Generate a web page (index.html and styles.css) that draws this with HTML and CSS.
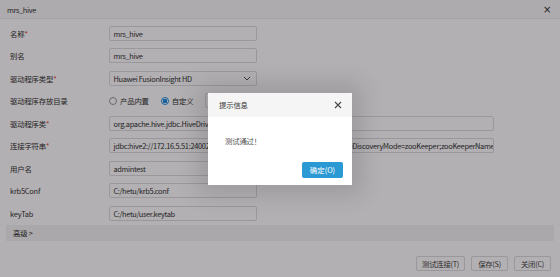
FILE: index.html
```html
<!DOCTYPE html>
<html lang="zh-CN">
<head>
  <meta charset="UTF-8">
  <title>mrs_hive</title>
  <link rel="stylesheet" href="styles.css">
</head>
<body>
  <div class="window">
    <div class="titlebar">
      <span>mrs_hive</span>
      <span class="x">&times;</span>
    </div>
    <div class="form">
      <div class="row">
        <label>名称<i>*</i></label>
        <div class="field">mrs_hive</div>
      </div>
      <div class="row">
        <label>别名</label>
        <div class="field">mrs_hive</div>
      </div>
      <div class="row">
        <label>驱动程序类型<i>*</i></label>
        <div class="field select">Huawei FusionInsight HD
          <svg width="8" height="5" viewBox="0 0 8 5"><path d="M1 1l3 3 3-3" fill="none" stroke="#555" stroke-width="1"/></svg>
        </div>
      </div>
      <div class="row">
        <label>驱动程序存放目录</label>
        <div class="radios">
          <span class="radio"></span><span>产品内置</span>
          <span class="radio on"></span><span>自定义</span>
          <div class="field dir">MRS_Hive</div>
        </div>
      </div>
      <div class="row">
        <label>驱动程序类<i>*</i></label>
        <div class="field wide">org.apache.hive.jdbc.HiveDriver</div>
      </div>
      <div class="row">
        <label>连接字符串<i>*</i></label>
        <div class="field wide">jdbc:hive2://172.16.5.51:24002,172.16.5.52:24002,172.16.5.53:24002/;serviceDiscoveryMode=zooKeeper;zooKeeperNamespace=hiveserver2</div>
      </div>
      <div class="row">
        <label>用户名</label>
        <div class="field">admintest</div>
      </div>
      <div class="row">
        <label>krb5Conf</label>
        <div class="field">C:/hetu/krb5.conf</div>
      </div>
      <div class="row">
        <label>keyTab</label>
        <div class="field">C:/hetu/user.keytab</div>
      </div>
    </div>
    <div class="advanced">高级 &gt;</div>
    <div class="footer">
      <button>测试连接(T)</button>
      <button>保存(S)</button>
      <button>关闭(C)</button>
    </div>

    <div class="overlay">
      <div class="dialog">
        <div class="dialog-head">
          <span>提示信息</span>
          <svg width="8" height="8" viewBox="0 0 8 8"><path d="M1 1l6 6M7 1l-6 6" stroke="#444" stroke-width="1.1"/></svg>
        </div>
        <div class="dialog-body">测试通过！</div>
        <div class="dialog-foot">
          <button class="ok">确定(O)</button>
        </div>
      </div>
    </div>
  </div>
</body>
</html>
```

FILE: styles.css
```css
body { margin: 0; font-family: "Noto Sans CJK SC", "Noto Sans", sans-serif; font-size: 7.4px; letter-spacing: -0.2px; color: #333; }
.window { position: relative; width: 560px; height: 277px; background: #fff; overflow: hidden; display: flex; flex-direction: column; }
.titlebar { height: 18px; border-bottom: 1px solid #ececec; background: #f8f8f8; padding: 0 9px 0 7px; display: flex; align-items: center; justify-content: space-between; letter-spacing: -0.35px; }
.titlebar .x { font-family: "DejaVu Sans", sans-serif; font-size: 10px; color: #333; }
.form { padding: 3px 6px 0 10px; }
.row { display: grid; grid-template-columns: 99px 1fr; height: 22.5px; align-items: center; }
.row label i { color: #e0302a; font-style: normal; }
.field { box-sizing: border-box; width: 148px; height: 15px; border: 1px solid #dcdcdc; border-radius: 2px; background: #fff; padding: 0 4px 0 3.5px; line-height: 13px; white-space: nowrap; overflow: hidden; font-size: 7.4px; letter-spacing: -0.35px; }
.field.wide { width: 385px; letter-spacing: -0.3px; }
.field.select { display: flex; justify-content: space-between; align-items: center; padding-right: 5px; }
.radios { display: flex; align-items: center; height: 15px; }
.radio { box-sizing: border-box; width: 8px; height: 8px; border: 1px solid #999; border-radius: 50%; margin-right: 3px; background: #fff; }
.radio.on { border-color: #1e8fe0; background: radial-gradient(circle, #1e8fe0 0 2px, #fff 2.5px); }
.radios span + .radio { margin-left: 12px; }
.field.dir { width: 100px; margin-left: 12px; }
.advanced { margin: 0 6px; height: 16px; background: #f4f4f4; padding-left: 7px; display: flex; align-items: center; }
.footer { flex: 1; display: flex; justify-content: flex-end; align-items: flex-end; gap: 6px; padding: 0 9px 6px 0; }
.footer button { min-width: 37px; height: 15px; padding: 0 5px; border: 1px solid #dcdcdc; border-radius: 2px; background: #fff; font: inherit; letter-spacing: -0.3px; color: #444; }
.overlay { position: absolute; inset: 0; background: rgba(8, 0, 8, 0.31); display: flex; align-items: center; justify-content: center; }
.dialog { width: 144px; height: 92px; background: #fff; display: flex; flex-direction: column; box-shadow: 0 0 22px 10px rgba(0, 0, 0, 0.12); }
.dialog-head { height: 24px; background: #f5f5f5; padding: 0 10px 0 11px; display: flex; align-items: center; justify-content: space-between; color: #333; }
.dialog-body { flex: 1; padding: 18px 0 0 17px; color: #555; }
.dialog-foot { display: flex; justify-content: flex-end; padding: 0 9px 7px 0; }
.ok { width: 41px; height: 16px; border: none; border-radius: 2px; background: #2b9ad4; color: #fff; font: inherit; padding: 0; }
```
